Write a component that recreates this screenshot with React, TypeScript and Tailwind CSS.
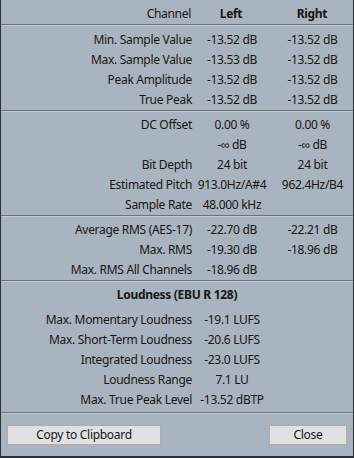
import React from "react";

type Row = [string, string, string?];

const sec1: Row[] = [
  ["Min. Sample Value", "-13.52 dB", "-13.52 dB"],
  ["Max. Sample Value", "-13.53 dB", "-13.52 dB"],
  ["Peak Amplitude", "-13.52 dB", "-13.52 dB"],
  ["True Peak", "-13.52 dB", "-13.52 dB"],
];
const sec2: Row[] = [
  ["DC Offset", "0.00 %", "0.00 %"],
  ["", "-∞ dB", "-∞ dB"],
  ["Bit Depth", "24 bit", "24 bit"],
  ["Estimated Pitch", "913.0Hz/A#4", "962.4Hz/B4"],
  ["Sample Rate", "48.000 kHz", ""],
];
const sec3: Row[] = [
  ["Average RMS (AES-17)", "-22.70 dB", "-22.21 dB"],
  ["Max. RMS", "-19.30 dB", "-18.96 dB"],
  ["Max. RMS All Channels", "-18.96 dB", ""],
];
const sec4: Row[] = [
  ["Max. Momentary Loudness", "-19.1 LUFS", ""],
  ["Max. Short-Term Loudness", "-20.6 LUFS", ""],
  ["Integrated Loudness", "-23.0 LUFS", ""],
  ["Loudness Range", "7.1 LU", ""],
  ["Max. True Peak Level", "-13.52 dBTP", ""],
];

function Rows({ rows }: { rows: Row[] }) {
  return (
    <>
      {rows.map((r, i) => (
        <div key={i} className="grid grid-cols-[191px_80px_1fr] h-[20px] items-center">
          <div className="text-right whitespace-nowrap">{r[0]}</div>
          <div className="text-center whitespace-nowrap">{r[1]}</div>
          <div className="text-center whitespace-nowrap">{r[2]}</div>
        </div>
      ))}
    </>
  );
}

function Sep() {
  return (
    <div className="flex flex-col">
      <div className="h-px bg-[#69737c]" />
      <div className="h-px bg-[#c3cad1]" />
    </div>
  );
}

export default function App() {
  return (
    <div
      className="w-[354px] h-[458px] bg-[#a8b4bf] text-[#161616] text-[12px] tracking-[-0.3px] leading-none border-l border-r border-b-2 border-[#2c3035] flex flex-col"
      style={{ fontFamily: '"Noto Sans", sans-serif' }}
    >
      <div className="pt-[4px]">
        <div className="grid grid-cols-[190px_80px_1fr] h-[20px] items-center">
          <div className="text-right">Channel</div>
          <div className="text-center font-bold">Left</div>
          <div className="text-center font-bold">Right</div>
        </div>
      </div>
      <Sep />
      <div className="pt-[4px]">
        <Rows rows={sec1} />
      </div>
      <Sep />
      <div className="pt-[3px]">
        <Rows rows={sec2} />
      </div>
      <Sep />
      <div className="pt-[3px]">
        <Rows rows={sec3} />
      </div>
      <Sep />
      <div className="pt-[3px] pb-[2px]">
        <div className="h-[20px] flex items-center justify-center font-bold">Loudness (EBU R 128)</div>
        <div className="h-[5px]" />
        <Rows rows={sec4} />
      </div>
      <Sep />
      <div className="flex justify-between items-start pt-[11px] pl-[6px] pr-[6px]">
        <button className="w-[154px] h-[20px] bg-[#e1e1e1] border border-[#adadad] text-[12px] leading-none">
          Copy to Clipboard
        </button>
        <button className="w-[78px] h-[20px] bg-[#e1e1e1] border border-[#adadad] text-[12px] leading-none">
          Close
        </button>
      </div>
    </div>
  );
}
